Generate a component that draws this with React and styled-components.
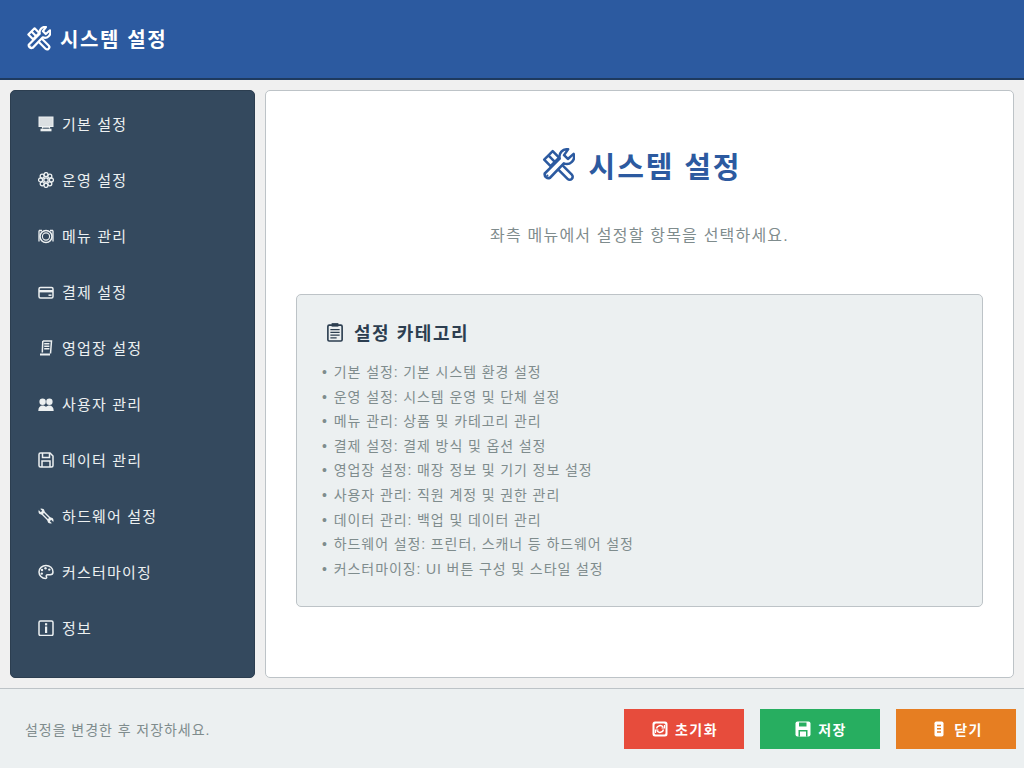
import styled, { createGlobalStyle } from 'styled-components'

const GlobalStyle = createGlobalStyle`
  * {
    box-sizing: border-box;
  }
  html, body {
    margin: 0;
    padding: 0;
  }
  body {
    font-family: 'Liberation Sans', 'Noto Sans CJK KR', sans-serif;
    background: #f0f0f0;
  }
`

const Page = styled.div`
  width: 1024px;
  height: 768px;
  display: flex;
  flex-direction: column;
  background: #f0f0f0;
  overflow: hidden;
`

const Header = styled.header`
  height: 80px;
  flex: none;
  display: flex;
  align-items: center;
  gap: 9px;
  padding: 0 0 2px 26px;
  background: #2c5aa0;
  border-bottom: 2px solid #1e3a5f;
  color: #fff;
  font-size: 20px;
  font-weight: 700;
  letter-spacing: 0.08em;
`

const Body = styled.div`
  flex: 1;
  display: flex;
  gap: 10px;
  padding: 10px;
  min-height: 0;
`

const Sidebar = styled.nav`
  width: 245px;
  flex: none;
  padding: 5px 0;
  background: #34495e;
  border: 1px solid #2c3e50;
  border-radius: 5px;
`

const MenuItem = styled.div`
  height: 56px;
  display: flex;
  align-items: center;
  gap: 8px;
  padding-left: 27px;
  color: #ecf0f1;
  font-size: 15px;
  letter-spacing: 0.08em;
`

const MenuLabel = styled.span`
  margin-top: -2px;
`

const Content = styled.main`
  flex: 1;
  padding: 40px 30px;
  background: #fff;
  border: 1px solid #bdc3c7;
  border-radius: 5px;
`

const Title = styled.h1`
  margin: 0;
  height: 68px;
  display: flex;
  align-items: center;
  justify-content: center;
  gap: 14px;
  padding-left: 3px;
  color: #2c5aa0;
  font-size: 29px;
  font-weight: 700;
  letter-spacing: 0.065em;
`

const Subtitle = styled.p`
  margin: 25px 0 0;
  height: 24px;
  line-height: 24px;
  text-align: center;
  color: #7f8c8d;
  font-size: 16px;
  letter-spacing: 0.075em;
`

const CategoryBox = styled.section`
  margin-top: 46px;
  height: 313px;
  padding: 25px;
  background: #ecf0f1;
  border: 1px solid #bdc3c7;
  border-radius: 5px;
`

const CategoryTitle = styled.h3`
  margin: 0 0 16px;
  height: 24px;
  display: flex;
  align-items: center;
  gap: 9px;
  padding-left: 3px;
  color: #2c3e50;
  font-size: 18px;
  font-weight: 700;
  letter-spacing: 0.085em;
`

const CategoryList = styled.ul`
  margin: 0;
  padding: 0;
  list-style: none;
`

const CategoryItem = styled.li`
  display: flex;
  gap: 6px;
  height: 24.6px;
  line-height: 24.6px;
  color: #7f8c8d;
  font-size: 14px;
  letter-spacing: 0.064em;
  white-space: nowrap;
`

const Footer = styled.footer`
  height: 80px;
  flex: none;
  display: flex;
  align-items: center;
  justify-content: space-between;
  padding: 0 8px 0 25px;
  background: #ecf0f1;
  border-top: 1px solid #bdc3c7;
`

const Hint = styled.span`
  color: #7f8c8d;
  font-size: 14px;
  letter-spacing: 0.068em;
`

const Actions = styled.div`
  display: flex;
  gap: 16px;
`

const ActionButton = styled.button`
  width: 120px;
  height: 40px;
  display: flex;
  align-items: center;
  justify-content: center;
  gap: 7px;
  padding: 0 0 0 2px;
  border: none;
  color: #fff;
  background: ${(p) => p.$bg};
  font-family: inherit;
  font-size: 14px;
  font-weight: 700;
  letter-spacing: 0.1em;
`

const Svg = styled.svg`
  flex: none;
  display: block;
  width: ${(p) => p.$size}px;
  height: ${(p) => p.$size}px;
`

const Icon = ({ size = 16, view = 16, children }) => (
  <Svg $size={size} viewBox={`0 0 ${view} ${view}`} fill="none" stroke="currentColor" strokeWidth="1.5">
    {children}
  </Svg>
)

// hammer under an open-jaw wrench, both outlined with the colour behind them as fill
const ToolsIcon = ({ size, bg, weight }) => (
  <Icon size={size} view={32}>
    <g fill={bg} strokeWidth={weight} strokeLinejoin="round">
      <path d="M10 14L14 10L29 25A2.8 2.8 0 0 1 25 29Z" />
      <path d="M3 11L11 3L17 9L9 17Z" />
      <path d="M7 7L13 13" />
      <path d="M3.5 24L17.6 10A7 7 0 0 1 25.5 1.3L21.7 6.7L25.3 10.3L30.7 5.5A7 7 0 0 1 21.5 14.5L8.5 28A3.6 3.6 0 0 1 3.5 24Z" />
    </g>
    <circle cx="6" cy="26" r="1" fill="currentColor" stroke="none" />
  </Icon>
)

const MonitorIcon = () => (
  <Icon>
    <rect x="1" y="1" width="14" height="9.5" fill="currentColor" fillOpacity="0.9" strokeWidth="1" />
    <path d="M4.5 10.5v2M11.5 10.5v2" strokeWidth="1.2" />
    <path d="M4.5 11.5h7" strokeOpacity="0.7" strokeWidth="1" />
    <rect x="2.5" y="12.7" width="11" height="2.6" fill="currentColor" stroke="none" />
  </Icon>
)

const FlowerIcon = () => (
  <Icon>
    {[0, 45, 90, 135, 180, 225, 270, 315].map((a) => (
      <circle
        key={a}
        cx={8 + 5.4 * Math.cos((a * Math.PI) / 180)}
        cy={8 + 5.4 * Math.sin((a * Math.PI) / 180)}
        r="2"
        strokeWidth="1.3"
      />
    ))}
    <circle cx="8" cy="8" r="2.2" strokeWidth="1.3" />
  </Icon>
)

const PlateIcon = () => (
  <Icon>
    <circle cx="8" cy="8.5" r="6" strokeWidth="1.6" />
    <circle cx="8" cy="8.5" r="3.6" strokeWidth="1.1" />
    <path d="M1 2.5h3M12 2.5h3M1 2.5v11M15 2.5v11" strokeWidth="1.3" />
  </Icon>
)

const CardIcon = () => (
  <Icon>
    <rect x="1" y="3.5" width="14" height="10.5" rx="1.5" />
    <rect x="1" y="6" width="14" height="2.4" fill="currentColor" stroke="none" />
    <path d="M10.5 11.2h3" />
  </Icon>
)

const ReceiptIcon = () => (
  <Icon>
    <path d="M4.8 1h8.7L12.5 13.5" />
    <path d="M4.8 1L4.3 12.5" />
    <path d="M6.2 3.8h5.2M6.2 6.3h5.2M6.2 8.8h5.2" strokeWidth="1.6" />
    <path d="M2 14.5h10" strokeWidth="2" />
  </Icon>
)

const PeopleIcon = () => (
  <Icon>
    <g fill="currentColor" stroke="none">
      <circle cx="4.6" cy="5.8" r="3.2" />
      <circle cx="11.4" cy="5.8" r="3.2" />
      <path d="M0.3 15c0-3.6 1.8-5.5 4.3-5.5 1.4 0 2.6.5 3.4 1.5.8-1 2-1.5 3.4-1.5 2.5 0 4.3 1.9 4.3 5.5z" />
    </g>
  </Icon>
)

const FloppyIcon = () => (
  <Icon>
    <path d="M2.5 1h9.5l3 3v9.5a1.5 1.5 0 0 1-1.5 1.5h-11A1.5 1.5 0 0 1 1 13.5v-11A1.5 1.5 0 0 1 2.5 1z" />
    <path d="M4.5 1v4.5h7V1" />
    <path d="M4 15V9h8v6" />
  </Icon>
)

const SolidFloppyIcon = ({ bg }) => (
  <Icon>
    <rect x="0.5" y="0.5" width="15" height="15" rx="2" fill="currentColor" stroke="none" />
    <rect x="4" y="1.5" width="7.5" height="4" fill={bg} stroke="none" />
    <rect x="3.5" y="9" width="9" height="6.5" fill={bg} stroke="none" />
    <rect x="5" y="10.5" width="6" height="5" fill="currentColor" stroke="none" />
  </Icon>
)

const WrenchIcon = () => (
  <Icon>
    <path d="M4 4L12 12" strokeWidth="4.2" />
    <circle cx="3.5" cy="3.5" r="3" fill="currentColor" stroke="none" />
    <circle cx="12.5" cy="12.5" r="3" fill="currentColor" stroke="none" />
    <path d="M1 1L3.5 3.5M15 15L12.5 12.5" stroke="#34495e" strokeWidth="1.8" />
    <path d="M5.5 5.5L10.5 10.5" stroke="#34495e" strokeWidth="1.5" />
  </Icon>
)

const PaletteIcon = () => (
  <Icon>
    <path d="M8 1.5c-3.8 0-7 2.8-7 6.4 0 3.5 2.9 6.6 6.5 6.6 1.4 0 1.3-1 .9-1.8-.5-1 0-2 1.2-2h2.4c1.7 0 3-1.1 3-2.8C15 4.2 11.9 1.5 8 1.5z" />
    <g fill="currentColor" stroke="none">
      <circle cx="4" cy="6" r="1.2" />
      <circle cx="7.5" cy="4.2" r="1.2" />
      <circle cx="11.3" cy="5.6" r="1.2" />
      <circle cx="3.8" cy="9.6" r="1.2" />
    </g>
  </Icon>
)

const InfoIcon = () => (
  <Icon>
    <rect x="1" y="1" width="14" height="14.5" rx="1.5" />
    <rect x="7" y="3.2" width="2.2" height="2.2" fill="currentColor" stroke="none" />
    <rect x="7" y="6.5" width="2.2" height="6.5" fill="currentColor" stroke="none" />
  </Icon>
)

const ClipboardIcon = () => (
  <Icon size={20}>
    <rect x="2.3" y="2.5" width="11.4" height="12.7" rx="1" strokeWidth="1.3" />
    <rect x="5.3" y="0.9" width="5.4" height="2.8" fill="currentColor" stroke="none" />
    <path d="M4.3 6h7.4M4.3 8.2h7.4M4.3 10.4h7.4M4.3 12.6h5" strokeWidth="1" />
  </Icon>
)

const ResetIcon = ({ bg }) => (
  <Icon>
    <rect x="0.5" y="0.5" width="15" height="15" rx="2.5" fill="currentColor" stroke="none" />
    <rect x="2.5" y="2.5" width="11" height="11" rx="1.5" fill={bg} stroke="none" />
    <path d="M4.5 7.5a3.6 3.6 0 0 1 6.6-1.2M11.5 8.5a3.6 3.6 0 0 1-6.6 1.2" strokeWidth="1.5" />
    <path d="M9.5 7h3v-3M6.5 9h-3v3" strokeWidth="1.2" />
  </Icon>
)

const DoorIcon = ({ bg }) => (
  <Icon>
    <rect x="3.5" y="0.5" width="9" height="15" rx="1.8" fill="currentColor" stroke="none" />
    <path d="M6 4.5h4M6 7.8h4M6 11h4" stroke={bg} strokeWidth="1.4" />
  </Icon>
)

const menus = [
  { icon: <MonitorIcon />, label: '기본 설정' },
  { icon: <FlowerIcon />, label: '운영 설정' },
  { icon: <PlateIcon />, label: '메뉴 관리' },
  { icon: <CardIcon />, label: '결제 설정' },
  { icon: <ReceiptIcon />, label: '영업장 설정' },
  { icon: <PeopleIcon />, label: '사용자 관리' },
  { icon: <FloppyIcon />, label: '데이터 관리' },
  { icon: <WrenchIcon />, label: '하드웨어 설정' },
  { icon: <PaletteIcon />, label: '커스터마이징' },
  { icon: <InfoIcon />, label: '정보' },
]

const categories = [
  '기본 설정: 기본 시스템 환경 설정',
  '운영 설정: 시스템 운영 및 단체 설정',
  '메뉴 관리: 상품 및 카테고리 관리',
  '결제 설정: 결제 방식 및 옵션 설정',
  '영업장 설정: 매장 정보 및 기기 정보 설정',
  '사용자 관리: 직원 계정 및 권한 관리',
  '데이터 관리: 백업 및 데이터 관리',
  '하드웨어 설정: 프린터, 스캐너 등 하드웨어 설정',
  '커스터마이징: UI 버튼 구성 및 스타일 설정',
]

export default function App() {
  return (
    <>
      <GlobalStyle />
      <Page>
        <Header>
          <ToolsIcon size={25} bg="#2c5aa0" weight="2.8" />
          <span>시스템 설정</span>
        </Header>
        <Body>
          <Sidebar>
            {menus.map((m) => (
              <MenuItem key={m.label}>
                {m.icon}
                <MenuLabel>{m.label}</MenuLabel>
              </MenuItem>
            ))}
          </Sidebar>
          <Content>
            <Title>
              <ToolsIcon size={34} bg="#fff" weight="2.4" />
              <span>시스템 설정</span>
            </Title>
            <Subtitle>좌측 메뉴에서 설정할 항목을 선택하세요.</Subtitle>
            <CategoryBox>
              <CategoryTitle>
                <ClipboardIcon />
                <span>설정 카테고리</span>
              </CategoryTitle>
              <CategoryList>
                {categories.map((c) => (
                  <CategoryItem key={c}>
                    <span>•</span>
                    <span>{c}</span>
                  </CategoryItem>
                ))}
              </CategoryList>
            </CategoryBox>
          </Content>
        </Body>
        <Footer>
          <Hint>설정을 변경한 후 저장하세요.</Hint>
          <Actions>
            <ActionButton $bg="#e74c3c">
              <ResetIcon bg="#e74c3c" />
              <span>초기화</span>
            </ActionButton>
            <ActionButton $bg="#27ae60">
              <SolidFloppyIcon bg="#27ae60" />
              <span>저장</span>
            </ActionButton>
            <ActionButton $bg="#e67e22">
              <DoorIcon bg="#e67e22" />
              <span>닫기</span>
            </ActionButton>
          </Actions>
        </Footer>
      </Page>
    </>
  )
}
